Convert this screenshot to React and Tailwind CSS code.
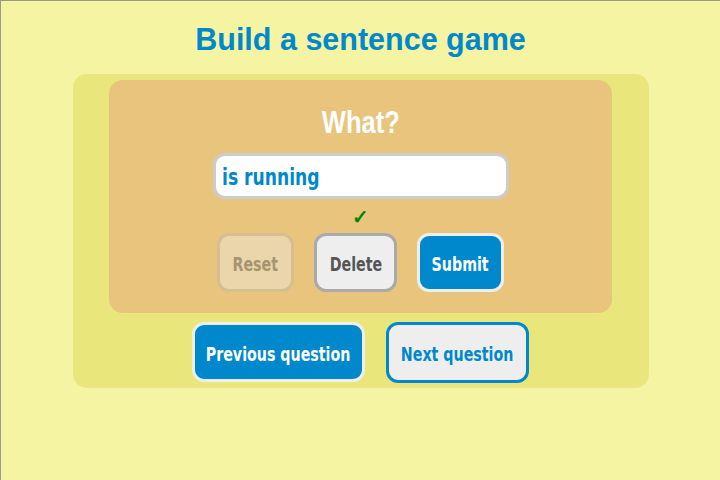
import React from 'react';

const dv = { fontFamily: '"DejaVu Sans", sans-serif' };

const Btn = ({ children, className }) => (
  <button className={`h-[59px] rounded-[12px] border-[3px] pt-[5px] text-[19.5px] font-bold whitespace-nowrap flex items-center justify-center ${className}`} style={dv}>
    <span className="inline-block scale-x-[0.73]">{children}</span>
  </button>
);

export default function App() {
  return (
    <div className="w-[720px] h-[480px] bg-[#f4f4a3] border-l border-t border-[#9a9a82] flex flex-col items-center overflow-hidden">
      <h1 className="mt-[18px] h-[40px] leading-[40px] text-[30.5px] font-bold text-[#0088cc] font-['Liberation_Sans',sans-serif]">
        Build a sentence game
      </h1>
      <div className="mt-[15px] w-[576px] h-[314px] bg-[#e9e77c] rounded-[14px] flex flex-col items-center pt-[6px]">
        <div className="w-[503px] h-[233px] bg-[#e8c47c] rounded-[14px] flex flex-col items-center">
          <div className="mt-[25px] h-[34px] leading-[34px] text-[32px] font-bold text-white font-['Liberation_Sans',sans-serif] scale-x-[0.8]">
            What?
          </div>
          <div className="mt-[14px] w-[296px] h-[46px] bg-white border-[3px] border-[#cccccc] rounded-[12px] flex items-center px-[6px] pt-[3px]">
            <span className="inline-block origin-left scale-x-[0.73] text-[23.5px] font-bold text-[#0088cc]" style={dv}>is running</span>
          </div>
          <div className="mt-[7px] h-[22px] leading-[22px] text-[20px] font-bold text-[#008000] font-['DejaVu_Sans',sans-serif] [-webkit-text-stroke:0.6px_#008000]">✓</div>
          <div className="mt-[5px] flex gap-[20px]">
            <Btn className="w-[77px] bg-[#ebd5ab] border-[#d4be92] text-[#a69470]">Reset</Btn>
            <Btn className="w-[83px] bg-[#eeeeee] border-[#aaaaaa] text-[#555555]">Delete</Btn>
            <Btn className="w-[87px] bg-[#0088cc] border-[#eeeeee] text-white">Submit</Btn>
          </div>
        </div>
        <div className="mt-[9px] flex gap-[21px]">
          <Btn className="w-[173px] h-[60px] bg-[#0088cc] border-[#eeeeee] text-white">Previous question</Btn>
          <Btn className="w-[143px] h-[61px] bg-[#eeeeee] border-[#0088cc] text-[#0088cc]">Next question</Btn>
        </div>
      </div>
    </div>
  );
}
